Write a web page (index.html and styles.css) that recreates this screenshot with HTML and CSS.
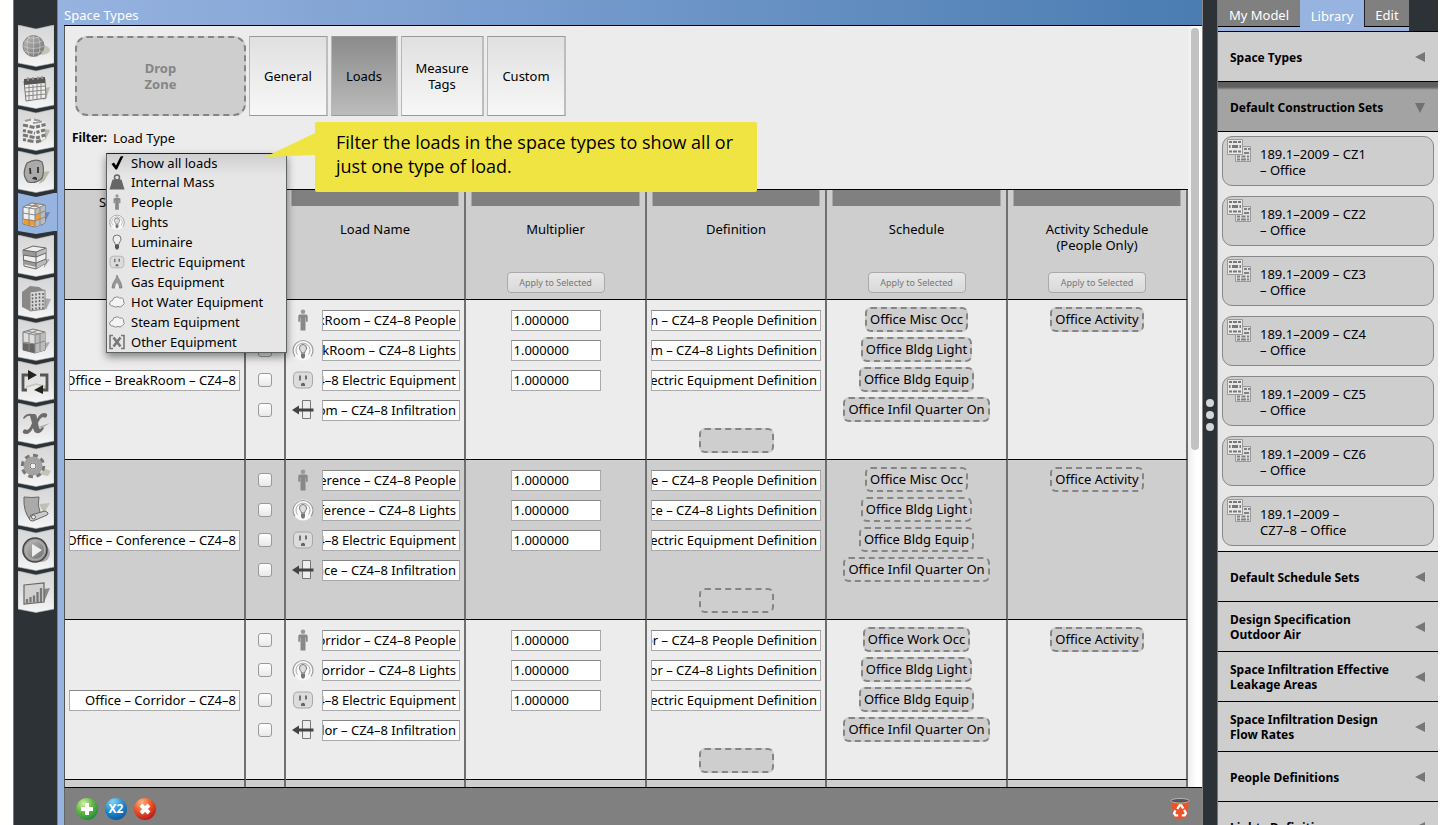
FILE: index.html
```html
<!DOCTYPE html>
<html lang="en">
<head>
<meta charset="utf-8">
<title>Space Types</title>
<link rel="stylesheet" href="styles.css">
</head>
<body>
<svg class="defs" aria-hidden="true">
  <defs>
    <linearGradient id="g-tile" x1="0" y1="0" x2="0" y2="1"><stop offset="0" stop-color="#d6d6d6"/><stop offset=".5" stop-color="#e2e2e2"/><stop offset="1" stop-color="#f6f6f6"/></linearGradient>
    <linearGradient id="g-metal" x1="0" y1="0" x2="1" y2="1"><stop offset="0" stop-color="#bbb"/><stop offset="1" stop-color="#707070"/></linearGradient>
    <radialGradient id="g-green" cx=".35" cy=".25" r=".8"><stop offset="0" stop-color="#d3f0a8"/><stop offset=".5" stop-color="#62b944"/><stop offset="1" stop-color="#1f8a3a"/></radialGradient>
    <radialGradient id="g-red" cx=".35" cy=".2" r=".85"><stop offset="0" stop-color="#ffb583"/><stop offset=".5" stop-color="#ee5426"/><stop offset="1" stop-color="#b5161c"/></radialGradient>
    <symbol id="tile" viewBox="0 0 36 42"><path d="M0 0 18 4 36 0V38L18 41.500 0 38Z" fill="url(#g-tile)" stroke="#bbb" stroke-width=".6"/></symbol>
    <symbol id="person" viewBox="0 0 22 22"><circle cx="11" cy="2.800" r="2.300" fill="#999"/><path d="M7.500 5.500h7l1.200 1.200v6h-1.800V8.500h-.4V21.500H8.500V8.500h-.4v4.200H6.300v-6Z" fill="#888"/></symbol>
    <symbol id="light" viewBox="0 0 22 22"><circle cx="11" cy="11" r="10.500" fill="#f8f8f8"/><path d="M3 17.500A10 10 0 1 1 19 17.500" fill="none" stroke="#999" stroke-width="1.200"/><path d="M5.500 15.500A7 7 0 1 1 16.500 15.500" fill="none" stroke="#aaa"/><path d="M9.500 14c0-2-2-2.500-2-5a3.500 3.500 0 0 1 7 0c0 2.500-2 3-2 5Z" fill="#ddd" stroke="#777"/><path d="M9 14.500h4V18l-1.200 1.500h-1.600L9 18Z" fill="#777"/></symbol>
    <symbol id="bulb" viewBox="0 0 16 16"><path d="M6.200 10.500c0-2-2.200-3-2.200-5.500a4 4 0 0 1 8 0c0 2.500-2.200 3.500-2.200 5.500Z" fill="#eee" stroke="#777"/><path d="M6 11h4v2.500L9 15.500H7L6 13.500Z" fill="#555"/></symbol>
    <symbol id="outlet" viewBox="0 0 22 22"><path d="M6 3h10q4.500 0 4.500 5v5q0 6-4.500 6H6q-4.500 0-4.500-6V8Q1.500 3 6 3Z" fill="#dcdcdc" stroke="#a6a6a6"/><path d="M8 6.500v5M14 6.500v4" stroke="#666" stroke-width="1.800"/><path d="M9 17v-2q2-2.500 4 0v2Z" fill="#666"/></symbol>
    <symbol id="infil" viewBox="0 0 22 22"><path d="M10.500 1.500h8v18h-8z" fill="#eee" stroke="#777"/><path d="M0 11 7 6.500V9.500h14.500v3H7v3Z" fill="#444"/></symbol>
    <symbol id="mass" viewBox="0 0 16 16"><circle cx="8" cy="3.500" r="2.500" fill="none" stroke="#666" stroke-width="1.500"/><path d="M3.500 5.500h9L15.500 15.500H.5Z" fill="#666"/></symbol>
    <symbol id="flame" viewBox="0 0 16 16"><path d="M8 1C8 5 3 8 3 14H6Q6 10 8 8.500 10 10 10 14H13C13 8 9 5 8 1Z" fill="#999" stroke="#777" stroke-width=".7"/><path d="M8 8.500Q10 11 10 14H6q0-3 2-5.500Z" fill="#eee"/></symbol>
    <symbol id="cloud" viewBox="0 0 16 16"><path d="M4 12Q0 12 .8 8.500 2 6.500 3.500 6.500 4 3 7.500 3 9.500 2.500 10.500 4 15 3.500 14.500 7 16.500 10 13.500 11.500 11 14 9 12.500 6 14 4 12Z" fill="#f4f4f4" stroke="#8a8a8a"/></symbol>
    <symbol id="other" viewBox="0 0 16 16"><path d="M4 1.500H1v13h3M12 1.500h3v13h-3" fill="none" stroke="#777" stroke-width="1.600"/><path d="m4.500 3.500 7 9M11.500 3.500l-7 9" stroke="#777" stroke-width="2.600"/></symbol>
    <symbol id="check" viewBox="0 0 16 16"><path d="M2.500 9 5 7.500l2 3L11.500 1.500 14.500 1 8 14.500H6.500Z" fill="#000"/></symbol>
    <symbol id="bricks" viewBox="0 0 24 24"><path d="M8.500 7.500h15v15h-15z" fill="#e0e0e0" stroke="#999"/><path d="M17 10h3M21 10h2M17 14h5M10 17.500h3M14.500 17.500h4M20 17.500h2M10 20.500h3M14 20.500h5M20 20.500h2" stroke="#808080" stroke-width="2"/><path d="M.5.500h15v15H.5z" fill="#e8e8e8" stroke="#999"/><path d="M2 3h3M6 3h4M11 3h3M2 12.500h3M6 12.500h4M11 12.500h3" stroke="#777" stroke-width="2"/><path d="M2 7.500h1.500M5 7.500h6M12.500 7.500H14" stroke="#777" stroke-width="3"/></symbol>
  </defs>
</svg>
<div class="app">
  <nav class="rail" aria-label="Sections">
    <button class="rail-item" aria-label="Site"><svg viewBox="0 0 36 42"><use href="#tile"/><ellipse cx="23" cy="25" rx="9" ry="5" fill="#c4c4b4"/><circle cx="15.500" cy="21" r="10.500" fill="url(#g-metal)" stroke="#777" stroke-width=".8"/><path d="M5 21q10 5 21 0M6.500 16q9 4 18 0M6.500 26q9 4 18 0M15.500 10.500v21M11 11.500q-4 9 0 19M20 11.500q4 9 0 19M10 12q6 3 11 0" fill="none" stroke="#ddd" stroke-width=".5"/></svg></button>
    <button class="rail-item" aria-label="Schedules"><svg viewBox="0 0 36 42"><use href="#tile"/><path d="m27 21 5-1-4 12-3 1Z" fill="#b9b9a9"/><path d="m6 14 21-2 1 19-20 3Z" fill="#eee" stroke="#777"/><path d="m6 12 21-2v6L6 18Z" fill="#555"/><path d="M10 10v4M15 10v3M20 9.500v3M24 9v3" stroke="#999" stroke-width="1.500"/><path d="m7 21 20-2M7 25l20-2M8 29l20-2M11 18v15M15 18v14M19 17v15M23 17v15" stroke="#888"/></svg></button>
    <button class="rail-item" aria-label="Constructions"><svg viewBox="0 0 36 42"><use href="#tile"/><path d="m27 20 5 1-4 9-5 3Z" fill="#b9b9a9"/><path d="m5 13 10-3 12 3v17l-10 4-12-3Z" fill="#eee"/><path d="m7 12 6-1.500M16 10.500l6 1.500M15 14l9-1.500" stroke="#999" stroke-width="2"/><path d="m5 16 5 1M11.500 17.500l5 1M18 18l4-1M23.500 16.500l4-1M5 21.500l3 .5M9.500 22.500l5 1M16 24l1 .2M18.500 23.500l3-1M23 22l4-1M5 26l5 1M11.500 27.500l5 1M18 29l4-1M23.500 27l4-1M5 30.500l3 .5M9.500 31.500l6 1M18 33l5-1.500" stroke="#777" stroke-width="3"/></svg></button>
    <button class="rail-item" aria-label="Loads"><svg viewBox="0 0 36 42"><use href="#tile"/><path d="m25 21 7-1-6 10-5 3Z" fill="#b9b9a9"/><path d="M9 12q9-5 15-1 3 8 0 16-6 6-14 4-7-7-1-19Z" fill="#aaa" stroke="#666" stroke-width="1.200"/><path d="m12 17 .5 6M20 16v6" stroke="#333" stroke-width="1.800"/><path d="M14 28q2-4 5-1v2Z" fill="#333"/></svg></button>
    <button class="rail-item active" aria-label="Space Types" aria-current="page"><svg viewBox="0 0 36 42"><path d="m25 20 7-1-6 12-3 2Z" fill="#7184ae"/><path d="m5 14 9-4 13 2v18l-10 4-12-3Z" fill="#f0f0f0" stroke="#777"/><path d="m17 16 10-4v18l-10 4Z" fill="#bbb"/><path d="m17 11 5 1-4 2-5-1ZM17 22l4-1v5l-4 1ZM6 26l11 1v6L6 31Z" fill="#f39b25"/><path d="m5 14 12 2 10-4M17 16v18M5 20l12 2 10-4M5 26l12 2 10-4M11 15v18M22 14v18M9 12l12 2M19 11l-8 4" fill="none" stroke="#888"/></svg></button>
    <button class="rail-item" aria-label="Geometry"><svg viewBox="0 0 36 42"><use href="#tile"/><path d="m26 25 6-1-6 9Z" fill="#aaa"/><path d="m5 15 10-4 13 2v15l-10 6-12-3Z" fill="#eee" stroke="#666"/><path d="m5 15 13 2v5L5 20ZM5 25l13 3v4L5 29Z" fill="#999"/><path d="m18 17 10-4v5l-10 4ZM18 28l10-4v4l-10 6Z" fill="#bbb"/><path d="m5 15 13 2 10-4M18 17v17M5 20l13 2 10-4M5 25l13 3 10-4" fill="none" stroke="#666"/></svg></button>
    <button class="rail-item" aria-label="Facility"><svg viewBox="0 0 36 42"><use href="#tile"/><path d="m25 21 8 1-5 11Z" fill="#aaa"/><path d="m4 15 8-6 9 1 6 4v18l-15 2-8-4Z" fill="#888"/><path d="m12 15 15-2v19l-15 2Z" fill="#d5d5d5" stroke="#888"/><path d="M14.500 17v16M18 16.500v16M21.500 16v16M25 16v16" stroke="#666" stroke-width="1.500" stroke-dasharray="2 1.500"/></svg></button>
    <button class="rail-item" aria-label="Thermal Zones"><svg viewBox="0 0 36 42"><use href="#tile"/><path d="m26 24 6-1-6 10Z" fill="#aaa"/><path d="m5 13 10-3 12 3v18l-10 3-12-3Z" fill="#ddd" stroke="#777"/><path d="m5 24 12 1v9L5 31Z" fill="#666"/><path d="m17 16 10-3v18l-10 3Z" fill="#bbb"/><path d="m5 13 12 3 10-3M17 16v18M5 23l12 2 10-3M11 14v18M22 14v18M9 12l12 3M20 11l-9 4" fill="none" stroke="#888"/></svg></button>
    <button class="rail-item" aria-label="HVAC"><svg viewBox="0 0 36 42"><use href="#tile"/><path d="m8 26 10-3 12 3M22 31l8-8" fill="none" stroke="#c5c5b8" stroke-width="1.500"/><path d="M9 29H5V14h7M22 14h7v15h-5" fill="none" stroke="#555" stroke-width="2.800"/><path d="m10 9 9 5-9 5ZM25 24v9l-9-4Z" fill="#222"/></svg></button>
    <button class="rail-item" aria-label="Variables"><svg viewBox="0 0 36 42"><use href="#tile"/><path d="m20 24 12-4-8 5Z" fill="#aaa"/><path d="M5 15q3-5 9-4h3q2 1 2 5 3-6 7-6 4 0 3 3-1 3-4 1-3 1-5 6l1 5q1 2 4-1l1 1q-3 6-7 5-3 0-4-5-3 6-7 6-4 0-3-3 1-3 4-1 3-1 5-7l-2-7q-2-1-6 3Z" fill="#6c6c6c"/></svg></button>
    <button class="rail-item" aria-label="Simulation Settings"><svg viewBox="0 0 36 42"><use href="#tile"/><path d="m20 29 8-5 5 2-3 5Z" fill="#c4c4b4"/><circle cx="15" cy="21" r="10.500" fill="none" stroke="#777" stroke-width="3.500" stroke-dasharray="4.700 3.500"/><circle cx="15" cy="21" r="6.500" fill="#eee" stroke="#a2a2a2" stroke-width="6"/><circle cx="15" cy="21" r="3" fill="#eee" stroke="#777"/></svg></button>
    <button class="rail-item" aria-label="Scripts"><svg viewBox="0 0 36 42"><use href="#tile"/><path d="m21 17 11-1-6 10Z" fill="#bfbfb3"/><path d="M6 10q8 1 15 0-2 8 1 15l-9 9Q5 25 6 10Z" fill="#aaa" stroke="#666"/><path d="m13 28 14-4q5 2 2 4l-14 6q-6 0-2-6Z" fill="#ccc" stroke="#666"/><circle cx="15.500" cy="30" r="2" fill="#eee" stroke="#666"/></svg></button>
    <button class="rail-item" aria-label="Run"><svg viewBox="0 0 36 42"><use href="#tile"/><ellipse cx="24" cy="24" rx="8" ry="9" fill="#aaa"/><circle cx="17" cy="21" r="12" fill="#999" stroke="#444" stroke-width="1.600"/><circle cx="17" cy="21" r="9.500" fill="url(#g-metal)" stroke="#bbb" stroke-width=".8"/><path d="m14 15 10 6-10 7Z" fill="#eee"/></svg></button>
    <button class="rail-item" aria-label="Results"><svg viewBox="0 0 36 42"><use href="#tile"/><path d="m26 18 6-1-6 14Z" fill="#888"/><path d="m6 14 20-2v19L6 33Z" fill="#d0d0d0" stroke="#666" stroke-width="1.200"/><path d="M9 32v-4M12.500 31.500V26M16 31.500v-7M19.500 31V21M23 31V17" stroke="#777" stroke-width="2.300"/></svg></button>
  </nav>

  <main class="main">
    <h1 class="title">Space Types</h1>
    <div class="workspace">
      <div class="content">
        <div class="toolbar">
          <div class="dropzone">Drop<br>Zone</div>
          <button class="tab">General</button>
          <button class="tab narrow selected">Loads</button>
          <button class="tab wide">Measure<br>Tags</button>
          <button class="tab">Custom</button>
        </div>
        <div class="filter">
          <div class="filter-label"><strong>Filter:</strong><span id="load-type">Load Type</span></div>
          <ul class="menu" role="listbox" aria-labelledby="load-type">
            <li><button role="option" aria-selected="true"><svg><use href="#check"/></svg>Show all loads</button></li>
            <li><button role="option"><svg><use href="#mass"/></svg>Internal Mass</button></li>
            <li><button role="option"><svg><use href="#person"/></svg>People</button></li>
            <li><button role="option"><svg><use href="#light"/></svg>Lights</button></li>
            <li><button role="option"><svg><use href="#bulb"/></svg>Luminaire</button></li>
            <li><button role="option"><svg><use href="#outlet"/></svg>Electric Equipment</button></li>
            <li><button role="option"><svg><use href="#flame"/></svg>Gas Equipment</button></li>
            <li><button role="option"><svg><use href="#cloud"/></svg>Hot Water Equipment</button></li>
            <li><button role="option"><svg><use href="#cloud"/></svg>Steam Equipment</button></li>
            <li><button role="option"><svg><use href="#other"/></svg>Other Equipment</button></li>
          </ul>
          <div class="callout">
            <svg class="pointer" viewBox="0 0 50 26"><path d="M50 0V22L0 24Z" fill="#f0e442"/></svg>
            Filter the loads in the space types to show all or<br>just one type of load.
          </div>
        </div>

        <table class="grid">
          <colgroup><col class="c-name"><col class="c-check"><col class="c-load"><col class="c-mult"><col class="c-load"><col class="c-mult"><col class="c-load"></colgroup>
          <thead>
            <tr>
              <th><div class="head plain"></div></th>
              <th></th>
              <th><div class="head"><span>Load Name</span></div></th>
              <th><div class="head"><span>Multiplier</span><button class="apply" disabled>Apply to Selected</button></div></th>
              <th><div class="head"><span>Definition</span></div></th>
              <th><div class="head"><span>Schedule</span><button class="apply" disabled>Apply to Selected</button></div></th>
              <th><div class="head"><span>Activity Schedule<br>(People Only)</span><button class="apply" disabled>Apply to Selected</button></div></th>
            </tr>
          </thead>
          <tbody>
            <tr>
              <td><div class="slots middle"><div><input class="tail" aria-label="Space type name" value="Office – BreakRoom – CZ4–8"></div></div></td>
              <td><div class="slots"><div><input type="checkbox" aria-label="Select people"></div><div><input type="checkbox" aria-label="Select lights"></div><div><input type="checkbox" aria-label="Select equipment"></div><div><input type="checkbox" aria-label="Select infiltration"></div></div></td>
              <td><div class="slots loads">
                <div><svg><use href="#person"/></svg><input class="tail" aria-label="Load name" value="Office – BreakRoom – CZ4–8 People"></div>
                <div><svg><use href="#light"/></svg><input class="tail" aria-label="Load name" value="Office – BreakRoom – CZ4–8 Lights"></div>
                <div><svg><use href="#outlet"/></svg><input class="tail" aria-label="Load name" value="Office – BreakRoom – CZ4–8 Electric Equipment"></div>
                <div><svg><use href="#infil"/></svg><input class="tail" aria-label="Load name" value="Office – BreakRoom – CZ4–8 Infiltration"></div></div></td>
              <td><div class="slots mult"><div><input aria-label="Multiplier" value="1.000000"></div><div><input aria-label="Multiplier" value="1.000000"></div><div><input aria-label="Multiplier" value="1.000000"></div></div></td>
              <td><div class="slots"><div><input class="tail" aria-label="Definition" value="Office – BreakRoom – CZ4–8 People Definition"></div><div><input class="tail" aria-label="Definition" value="Office – BreakRoom – CZ4–8 Lights Definition"></div><div><input class="tail" aria-label="Definition" value="Office – BreakRoom – CZ4–8 Electric Equipment Definition"></div><div></div><div><span class="drop empty"></span></div></div></td>
              <td><div class="slots chips"><div><span class="drop">Office Misc Occ</span></div><div><span class="drop">Office Bldg Light</span></div><div><span class="drop">Office Bldg Equip</span></div><div><span class="drop">Office Infil Quarter On</span></div></div></td>
              <td><div class="slots chips"><div><span class="drop">Office Activity</span></div></div></td>
            </tr>
            <tr>
              <td><div class="slots middle"><div><input class="tail" aria-label="Space type name" value="Office – Conference – CZ4–8"></div></div></td>
              <td><div class="slots"><div><input type="checkbox" aria-label="Select people"></div><div><input type="checkbox" aria-label="Select lights"></div><div><input type="checkbox" aria-label="Select equipment"></div><div><input type="checkbox" aria-label="Select infiltration"></div></div></td>
              <td><div class="slots loads">
                <div><svg><use href="#person"/></svg><input class="tail" aria-label="Load name" value="Office – Conference – CZ4–8 People"></div>
                <div><svg><use href="#light"/></svg><input class="tail" aria-label="Load name" value="Office – Conference – CZ4–8 Lights"></div>
                <div><svg><use href="#outlet"/></svg><input class="tail" aria-label="Load name" value="Office – Conference – CZ4–8 Electric Equipment"></div>
                <div><svg><use href="#infil"/></svg><input class="tail" aria-label="Load name" value="Office – Conference – CZ4–8 Infiltration"></div></div></td>
              <td><div class="slots mult"><div><input aria-label="Multiplier" value="1.000000"></div><div><input aria-label="Multiplier" value="1.000000"></div><div><input aria-label="Multiplier" value="1.000000"></div></div></td>
              <td><div class="slots"><div><input class="tail" aria-label="Definition" value="Office – Conference – CZ4–8 People Definition"></div><div><input class="tail" aria-label="Definition" value="Office – Conference – CZ4–8 Lights Definition"></div><div><input class="tail" aria-label="Definition" value="Office – Conference – CZ4–8 Electric Equipment Definition"></div><div></div><div><span class="drop empty"></span></div></div></td>
              <td><div class="slots chips"><div><span class="drop">Office Misc Occ</span></div><div><span class="drop">Office Bldg Light</span></div><div><span class="drop">Office Bldg Equip</span></div><div><span class="drop">Office Infil Quarter On</span></div></div></td>
              <td><div class="slots chips"><div><span class="drop">Office Activity</span></div></div></td>
            </tr>
            <tr>
              <td><div class="slots middle"><div><input class="tail" aria-label="Space type name" value="Office – Corridor – CZ4–8"></div></div></td>
              <td><div class="slots"><div><input type="checkbox" aria-label="Select people"></div><div><input type="checkbox" aria-label="Select lights"></div><div><input type="checkbox" aria-label="Select equipment"></div><div><input type="checkbox" aria-label="Select infiltration"></div></div></td>
              <td><div class="slots loads">
                <div><svg><use href="#person"/></svg><input class="tail" aria-label="Load name" value="Office – Corridor – CZ4–8 People"></div>
                <div><svg><use href="#light"/></svg><input class="tail" aria-label="Load name" value="Office – Corridor – CZ4–8 Lights"></div>
                <div><svg><use href="#outlet"/></svg><input class="tail" aria-label="Load name" value="Office – Corridor – CZ4–8 Electric Equipment"></div>
                <div><svg><use href="#infil"/></svg><input class="tail" aria-label="Load name" value="Office – Corridor – CZ4–8 Infiltration"></div></div></td>
              <td><div class="slots mult"><div><input aria-label="Multiplier" value="1.000000"></div><div><input aria-label="Multiplier" value="1.000000"></div><div><input aria-label="Multiplier" value="1.000000"></div></div></td>
              <td><div class="slots"><div><input class="tail" aria-label="Definition" value="Office – Corridor – CZ4–8 People Definition"></div><div><input class="tail" aria-label="Definition" value="Office – Corridor – CZ4–8 Lights Definition"></div><div><input class="tail" aria-label="Definition" value="Office – Corridor – CZ4–8 Electric Equipment Definition"></div><div></div><div><span class="drop empty"></span></div></div></td>
              <td><div class="slots chips"><div><span class="drop">Office Work Occ</span></div><div><span class="drop">Office Bldg Light</span></div><div><span class="drop">Office Bldg Equip</span></div><div><span class="drop">Office Infil Quarter On</span></div></div></td>
              <td><div class="slots chips"><div><span class="drop">Office Activity</span></div></div></td>
            </tr>
            <tr class="next"><td></td><td></td><td></td><td></td><td></td><td></td><td></td></tr>
          </tbody>
        </table>
      </div>
      <div class="scroll"><div class="thumb"></div></div>
    </div>
    <footer class="actions">
      <button aria-label="Add"><svg viewBox="0 0 22 22"><circle cx="11" cy="11" r="11" fill="url(#g-green)"/><path d="M11 5v12M5 11h12" stroke="#fff" stroke-width="4"/></svg></button>
      <button class="copy"><span>X2</span></button>
      <button aria-label="Remove"><svg viewBox="0 0 22 22"><circle cx="11" cy="11" r="11" fill="url(#g-red)"/><path d="m7 7 8 8M15 7l-8 8" stroke="#fff" stroke-width="4"/></svg></button>
      <button class="purge" aria-label="Purge unused"><svg viewBox="0 0 22 24"><path d="M1 3h20l-3 18q-7 4-14 0Z" fill="#ee5327"/><ellipse cx="11" cy="3" rx="10" ry="2.500" fill="#555" stroke="#bbb"/><path d="m8 12 2.500-4h2l2 3.500M15.500 13l2 3.500-1.500 2.500h-3M9 19H6l-1.500-2.500 1.500-3" fill="none" stroke="#fff" stroke-width="2.500"/></svg></button>
    </footer>
  </main>

  <div class="splitter"><i></i><i></i><i></i></div>

  <aside class="side">
    <div class="side-tabs">
      <button>My Model</button><button class="on">Library</button><button>Edit</button>
    </div>
    <div class="tab-line"></div>
    <button class="section">Space Types<span class="arrow"></span></button>
    <button class="section open">Default Construction Sets<span class="arrow"></span></button>
    <ul class="sets">
      <li><svg><use href="#bricks"/></svg>189.1–2009 – CZ1<br>– Office</li>
      <li><svg><use href="#bricks"/></svg>189.1–2009 – CZ2<br>– Office</li>
      <li><svg><use href="#bricks"/></svg>189.1–2009 – CZ3<br>– Office</li>
      <li><svg><use href="#bricks"/></svg>189.1–2009 – CZ4<br>– Office</li>
      <li><svg><use href="#bricks"/></svg>189.1–2009 – CZ5<br>– Office</li>
      <li><svg><use href="#bricks"/></svg>189.1–2009 – CZ6<br>– Office</li>
      <li><svg><use href="#bricks"/></svg>189.1–2009 –<br>CZ7–8 – Office</li>
    </ul>
    <button class="section">Default Schedule Sets<span class="arrow"></span></button>
    <button class="section">Design Specification<br>Outdoor Air<span class="arrow"></span></button>
    <button class="section">Space Infiltration Effective<br>Leakage Areas<span class="arrow"></span></button>
    <button class="section">Space Infiltration Design<br>Flow Rates<span class="arrow"></span></button>
    <button class="section">People Definitions<span class="arrow"></span></button>
    <button class="section">Lights Definitions<span class="arrow"></span></button>
  </aside>
</div>
</body>
</html>
```
FILE: styles.css
```css
* { box-sizing: border-box; }
body { margin: 0; background: #fff; color: #000; font: 13px/16px "Noto Sans", sans-serif; }
button, input { font: inherit; color: inherit; margin: 0; }
button { padding: 0; border: 0; background: none; }
ul { margin: 0; padding: 0; list-style: none; }
.defs { position: absolute; width: 0; height: 0; }

.app { display: flex; height: 100vh; overflow: hidden; padding: 0 2px 0 13px; }

.rail { flex: 0 0 44px; background: #2c3236; border-left: 1px solid #777; padding-top: 25px; }
.rail-item { display: block; width: 100%; height: 42px; padding-left: 4px; text-align: left; }
.rail-item svg { display: block; width: 36px; height: 42px; }
.rail-item.active { background: #97b3e0; clip-path: polygon(4px 0, 22px 4px, 40px 0, 100% 0, 100% 38px, 40px 38px, 22px 41px, 4px 38px); }

.main { flex: 1; min-width: 0; display: flex; flex-direction: column; background: linear-gradient(90deg, #97b3e0 0, #4a7cb2 100%); border-left: 1px solid #7085aa; padding-left: 6px; }
.title { margin: 0; height: 26px; padding-top: 6px; border-bottom: 1px solid #000; color: #fff; font-size: 13px; font-weight: 400; line-height: 18px; }
.workspace { flex: 1; min-height: 0; display: flex; background: #ececec; border-left: 1px solid #555; overflow: hidden; }
.content { flex: 1; min-width: 0; }
.scroll { width: 14px; padding: 2px 3px; background: linear-gradient(90deg, #eee, #fff 60%); }
.thumb { height: 422px; border-radius: 4px; background: #c2c2c2; }

.toolbar { display: flex; gap: 3px; padding: 10px 10px 0; }
.dropzone { width: 171px; height: 80px; display: flex; align-items: center; justify-content: center; text-align: center; border: 2px dashed #858585; border-radius: 12px; background: #cecece; color: #858585; font-weight: 700; }
.tab { width: 79px; height: 80px; border: 1px solid #999; border-left-color: #b8b8b8; border-right: 2px solid #bdbdbd; background: linear-gradient(#e0e0e0, #f7f7f7); }
.tab.narrow { width: 67px; }
.tab.wide { width: 83px; }
.tab.selected { background: linear-gradient(#8b8b8b, #bcbcbc); }

.filter { position: relative; height: 73px; padding: 14px 7px 0; }
.filter-label { display: flex; gap: 6px; }
.filter-label strong { font-size: 12px; }
.menu { position: absolute; z-index: 2; left: 41px; top: 37px; width: 181px; border: 1px solid #5c6362; border-top-color: #222; background: linear-gradient(#cfcfcf, #e6e6e6 22px); box-shadow: 0 4px 8px rgba(0, 0, 0, .45); }
.menu button { display: flex; align-items: center; gap: 6px; width: 100%; height: 20px; padding-left: 2px; text-align: left; white-space: nowrap; }
.menu li:first-child button { height: 18px; }
.menu svg { flex: none; width: 16px; height: 16px; }
.callout { position: absolute; z-index: 3; left: 250px; top: 6px; width: 442px; padding: 8px 0 14px 21px; border-radius: 2px; background: #f0e442; font-family: "Open Sans", sans-serif; font-size: 18px; line-height: 24px; white-space: nowrap; }
.pointer { position: absolute; right: 100%; top: 11px; width: 50px; height: 26px; }

.grid { width: 100%; table-layout: fixed; border-collapse: separate; border-spacing: 0; border-top: 1px solid #000; }
.c-name { width: 181px; }
.c-check { width: 40px; }
.c-load { width: 180px; }
.c-mult { width: 181px; }
.grid th, .grid td { padding: 0; vertical-align: top; border-right: 2px solid #707070; border-bottom: 1px solid #000; font-weight: 400; }
.grid th, .grid tr:nth-child(even) td { background: #cecece; }
.head { display: flex; flex-direction: column; align-items: center; height: 109px; text-align: center; padding: 0 6px; }
.head::before { content: ""; flex: none; width: 100%; height: 16px; margin-bottom: 15px; background: #808080; border: solid #a8a8a8; border-width: 0 1px; }
.head.plain { flex-direction: row; align-items: flex-start; justify-content: flex-start; padding: 4px 34px; }
.head.plain::before { content: "S"; width: auto; margin: 0; border: 0; background: none; }
.apply { width: 98px; height: 21px; margin: auto 0 6px; border: 1px solid #aaa; border-radius: 4px; background: linear-gradient(#e8e8e8, #d9d9d9); color: #777; font-size: 9px; }
.slots { display: flex; flex-direction: column; height: 159px; padding: 5px 4px 4px; }
.slots > div { display: flex; align-items: center; justify-content: center; flex: 0 0 30px; }
.slots.middle { justify-content: center; }
.slots.chips { padding-top: 4px; }
.slots input:not([type]) { width: 100%; min-width: 0; height: 21px; padding: 0 2px; border: 1px solid #aaa; border-top-color: #888; border-radius: 0; background: #fff; }
.slots input.tail:not([type]) { direction: rtl; padding: 0 3px 0 0; }
.slots.mult input:not([type]) { width: 90px; }
.loads svg { flex: none; width: 22px; height: 22px; margin: 0 8px 0 2px; }
.slots input[type="checkbox"] { appearance: none; width: 14px; height: 14px; border: 1px solid #999; border-radius: 3px; background: linear-gradient(#fff, #e8e8e8); }
.drop { height: 25px; padding: 3px; border: 2px dashed #858585; border-radius: 6px; background: #cecece; line-height: 15px; white-space: nowrap; }
.drop.empty { width: 75px; }
.next td { height: 20px; }

.actions { flex: 0 0 38px; display: flex; align-items: center; gap: 7px; padding: 4px 11px 0; background: #808080; border-top: 1px solid #000; border-left: 1px solid #666; }
.actions svg { display: block; width: 22px; height: 22px; }
.copy { width: 22px; height: 22px; border-radius: 50%; background: radial-gradient(circle at 35% 15%, #7fd3f5, #1a86cc 50%, #0a3f86); color: #fff; font-size: 12px; font-weight: 700; line-height: 22px; }
.purge { margin-left: auto; }

.splitter { flex: 0 0 15px; display: flex; flex-direction: column; align-items: center; justify-content: center; gap: 4px; padding-top: 4px; background: #2c3236; border-left: 1px solid #888; }
.splitter i { width: 8px; height: 8px; border-radius: 50%; background: #d4d7da; }

.side { flex: 0 0 221px; display: flex; flex-direction: column; overflow: hidden; background: #e6e6e6; border-left: 1px solid #777; }
.side-tabs { flex: 0 0 27px; display: flex; background: #2c3236; color: #fff; }
.side-tabs button { flex: 0 0 82px; padding-top: 4px; background: #808080; border-bottom: 1px solid #000; }
.side-tabs .on { flex-basis: 64px; background: #97b3e0; border: 0; }
.side-tabs button:last-child { flex-basis: 45px; border-left: 1px solid #222; }
.tab-line { flex: 0 0 5px; background: linear-gradient(90deg, #97b3e0 191px, #2c3236 191px); border-bottom: 1px solid #000; }
.section { position: relative; flex: 0 0 50px; padding: 1px 20px 0 12px; background: #cecece; border-bottom: 1px solid #000; text-align: left; font-size: 12px; font-weight: 700; line-height: 15px; white-space: nowrap; }
.section.open { background: linear-gradient(#5f5f5f 5px, #a3a3a3 8px); }
.arrow { position: absolute; right: 13px; top: 20px; border: solid transparent; border-width: 5px 10px 5px 0; border-right-color: #777; }
.open .arrow { top: 21px; border-width: 10px 5px 0; border-color: #707070 transparent; }
.sets { flex: none; display: grid; gap: 10px; padding: 4px 4px 5px; border-bottom: 1px solid #000; }
.sets li { height: 50px; padding: 9px 0 0 37px; position: relative; border: 1px solid #888; border-radius: 10px; background: #cecece; }
.sets svg { position: absolute; left: 4px; top: 2px; width: 24px; height: 24px; }
```
